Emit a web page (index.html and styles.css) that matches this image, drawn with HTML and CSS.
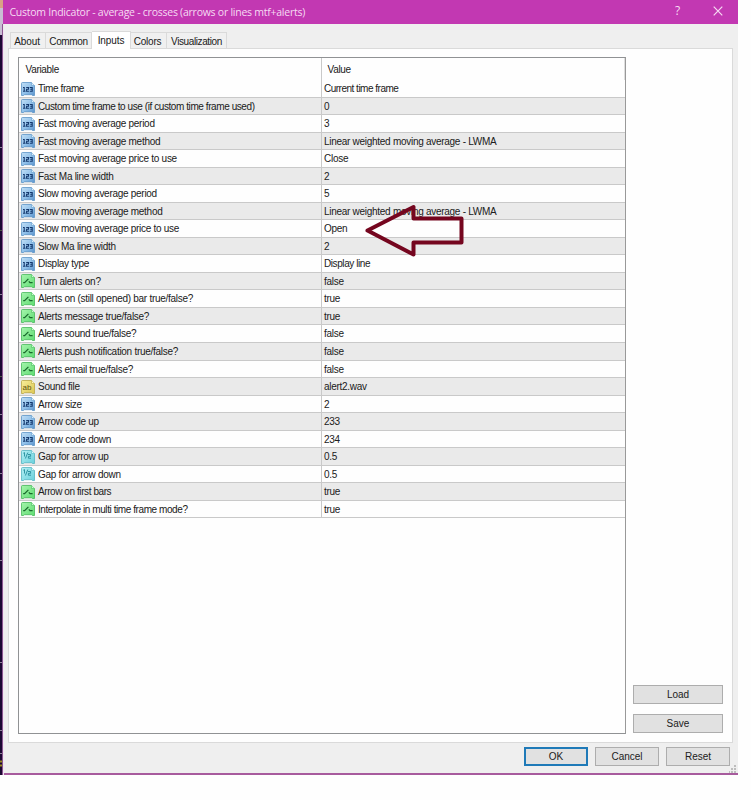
FILE: index.html
```html
<!DOCTYPE html>
<html lang="en">
<head>
<meta charset="utf-8">
<title>Custom Indicator</title>
<link rel="stylesheet" href="styles.css">
</head>
<body>
<svg class="defs" width="0" height="0" aria-hidden="true">
  <defs>
    <linearGradient id="gb" x1="0" y1="0" x2="1" y2="1"><stop offset="0" stop-color="#c0def5"/><stop offset=".55" stop-color="#8fc0ea"/><stop offset="1" stop-color="#5b93cc"/></linearGradient>
    <linearGradient id="gg" x1="0" y1="0" x2="1" y2="1"><stop offset="0" stop-color="#a5f5ac"/><stop offset="1" stop-color="#5fdc72"/></linearGradient>
    <linearGradient id="gy" x1="0" y1="0" x2="1" y2="1"><stop offset="0" stop-color="#f8ee9a"/><stop offset="1" stop-color="#dcc653"/></linearGradient>
    <linearGradient id="gc" x1="0" y1="0" x2="1" y2="1"><stop offset="0" stop-color="#b5f0f4"/><stop offset="1" stop-color="#69d0dc"/></linearGradient>
    <path id="page" d="M.5 1.5Q.5.5 1.5.5H10.5L13.5 3.5V13.5H11.5L10.5 12.7H3.5L2.5 13.5H.5Z"/>
    <symbol id="int" viewBox="0 0 14 14"><use href="#page" fill="url(#gb)" stroke="#5c94c6" stroke-width=".8"/><path d="M10.5 .5V3.5H13.5" fill="#d9edfb" stroke="#6da3d2" stroke-width=".7"/><path d="M2 5.5H3.2V9M2 9.200H4.500M5.200 5.500H7.500V7.300H5.600V9.200H7.900M8.800 5.500H11.200V9.200H8.800M9.300 7.300H11.200" fill="none" stroke="#14386d" stroke-width="1.100"/></symbol>
    <symbol id="bool" viewBox="0 0 14 14"><use href="#page" fill="url(#gg)" stroke="#48b75c" stroke-width=".8"/><path d="M10.5 .5V3.5H13.5" fill="#c8fbce" stroke="#55c467" stroke-width=".7"/><path d="M2.200 8.700H3.600L7.400 4.900M7.800 7.400L9 8.700H11.600" fill="none" stroke="#17662a" stroke-width="1.200"/></symbol>
    <symbol id="str" viewBox="0 0 14 14"><use href="#page" fill="url(#gy)" stroke="#b9a645" stroke-width=".8"/><path d="M10.5 .5V3.5H13.5" fill="#fff8c4" stroke="#c4b04b" stroke-width=".7"/><text x="1.5" y="9.700" class="glyph">ab</text></symbol>
    <symbol id="dbl" viewBox="0 0 14 14"><use href="#page" fill="url(#gc)" stroke="#55b5c1" stroke-width=".8"/><path d="M10.5 .5V3.5H13.5" fill="#dcfafb" stroke="#62bfca" stroke-width=".7"/><path d="M2.300 3.200L3.500 2.600V6.500M6.800 2.600L4.400 8.500M7 4.500H9.600V6.300H7.400V8.200H10" fill="none" stroke="#248b9b" stroke-width=".9"/></symbol>
  </defs>
</svg>
<div class="desktop">
  <svg class="chart" width="3" height="775" viewBox="0 0 3 775"><path d="M0 0H3V775H0Z" fill="#1c0833"/><path d="M0 0H3V8H0Z" fill="#d9a184"/><path d="M0 8H3V35H0Z" fill="#c9bdd3"/><path d="M0 147.500H3M0 294.500H3M0 414.500H3M0 473.500H3M0 560.500H3M0 662.500H3M0 730.500H3M0 753.500H3" stroke="#8d8198"/><path d="M0 230.500H3M0 376.500H3" stroke="#4c5944"/><path d="M0 761.500H2M0 765.500H2" stroke="#9b8c22" stroke-width="2"/><path d="M2.500 24V775" stroke="#8a5690"/></svg>
  <main class="window">
    <header class="title"><span class="caption">Custom Indicator - average - crosses (arrows or lines mtf+alerts)</span><span class="help">?</span><svg class="close" width="10" height="10" viewBox="0 0 10 10"><path d="M.7.7L9.300 9.300M9.300.7L.7 9.300" stroke="#f6dbf3" stroke-width="1.200"/></svg></header>
    <nav class="tabs"><span class="tab t1">About</span><span class="tab t2">Common</span><span class="tab t3 active">Inputs</span><span class="tab t4">Colors</span><span class="tab t5">Visualization</span></nav>
    <section class="panel">
      <div class="list">
        <div class="head"><span>Variable</span><span>Value</span></div>
        <div class="row"><svg><use href="#int"/></svg><span class="tight">Time frame</span><b class="tighter">Current time frame</b></div>
        <div class="row"><svg><use href="#int"/></svg><span class="tight">Custom time frame to use (if custom time frame used)</span><b>0</b></div>
        <div class="row"><svg><use href="#int"/></svg><span>Fast moving average period</span><b>3</b></div>
        <div class="row"><svg><use href="#int"/></svg><span>Fast moving average method</span><b>Linear weighted moving average - LWMA</b></div>
        <div class="row"><svg><use href="#int"/></svg><span>Fast moving average price to use</span><b>Close</b></div>
        <div class="row"><svg><use href="#int"/></svg><span>Fast Ma line width</span><b>2</b></div>
        <div class="row"><svg><use href="#int"/></svg><span>Slow moving average period</span><b>5</b></div>
        <div class="row"><svg><use href="#int"/></svg><span>Slow moving average method</span><b>Linear weighted moving average - LWMA</b></div>
        <div class="row"><svg><use href="#int"/></svg><span>Slow moving average price to use</span><b>Open</b></div>
        <div class="row"><svg><use href="#int"/></svg><span>Slow Ma line width</span><b>2</b></div>
        <div class="row"><svg><use href="#int"/></svg><span>Display type</span><b class="tight">Display line</b></div>
        <div class="row"><svg><use href="#bool"/></svg><span>Turn alerts on?</span><b>false</b></div>
        <div class="row"><svg><use href="#bool"/></svg><span>Alerts on (still opened) bar true/false?</span><b>true</b></div>
        <div class="row"><svg><use href="#bool"/></svg><span>Alerts message true/false?</span><b>true</b></div>
        <div class="row"><svg><use href="#bool"/></svg><span>Alerts sound true/false?</span><b>false</b></div>
        <div class="row"><svg><use href="#bool"/></svg><span>Alerts push notification true/false?</span><b>false</b></div>
        <div class="row"><svg><use href="#bool"/></svg><span>Alerts email true/false?</span><b>false</b></div>
        <div class="row"><svg><use href="#str"/></svg><span>Sound file</span><b>alert2.wav</b></div>
        <div class="row"><svg><use href="#int"/></svg><span>Arrow size</span><b>2</b></div>
        <div class="row"><svg><use href="#int"/></svg><span>Arrow code up</span><b>233</b></div>
        <div class="row"><svg><use href="#int"/></svg><span>Arrow code down</span><b>234</b></div>
        <div class="row"><svg><use href="#dbl"/></svg><span>Gap for arrow up</span><b>0.5</b></div>
        <div class="row"><svg><use href="#dbl"/></svg><span>Gap for arrow down</span><b>0.5</b></div>
        <div class="row"><svg><use href="#bool"/></svg><span class="tight">Arrow on first bars</span><b>true</b></div>
        <div class="row"><svg><use href="#bool"/></svg><span class="tight">Interpolate in multi time frame mode?</span><b>true</b></div>
      </div>
      <aside class="side"><button>Load</button><button>Save</button></aside>
    </section>
    <footer class="actions"><button class="primary">OK</button><button>Cancel</button><button>Reset</button><svg class="grip" width="8" height="8" viewBox="0 0 8 8"><path d="M5 0h2v2h-2zM2 3h2v2h-2zM5 3h2v2h-2zM0 6h1v2h-1zM2 6h2v2h-2zM5 6h2v2h-2z" fill="#bdbdbd"/></svg></footer>
    <div class="edge"></div>
  </main>
  <svg class="arrow" width="100" height="56" viewBox="365 203 100 56"><path d="M367.500 230.500L413.500 207V218.500H461.500V242.500H413.500V254.500Z" fill="none" stroke="#75061f" stroke-width="4" stroke-linejoin="round"/></svg>
</div>
</body>
</html>
```
FILE: styles.css
```css
* { box-sizing: border-box; }
body { margin: 0; background: #fefefe; color: #202020; font: 10px/14px "Liberation Sans", sans-serif; }
.defs { position: absolute; }
.desktop { position: relative; display: flex; width: 751px; height: 800px; overflow: hidden; }
.chart { flex: none; }
.window { width: 735px; height: 775px; display: flex; flex-direction: column; background: #efefef; border-left: 1px solid #f1e6f0; }
.title { height: 24px; flex: none; display: flex; align-items: center; background: #c238b2; color: #f6dbf3; margin-left: -1px; font: 10.5px/22px "Open Sans", sans-serif; }
.caption { width: 665px; padding-left: 6.5px; letter-spacing: -0.25px; white-space: nowrap; margin-top: -1px; }
.help { width: 45px; padding-left: 7px; font-size: 12px; margin-top: -2px; }
.close { margin-top: -2px; }
.tabs { height: 24px; flex: none; display: flex; align-items: flex-end; padding-left: 6px; }
.tab { height: 16px; border: 1px solid #dadada; border-width: 1px 1px 0 0; background: #f0f0f0; text-align: center; line-height: 17px; letter-spacing: -.3px; white-space: nowrap; }
.t1 { width: 36px; border-left-width: 1px; padding-right: 2px; letter-spacing: -.1px; }
.t2 { width: 46px; letter-spacing: -.35px; }
.t3 { width: 39px; letter-spacing: -.1px; }
.t4 { width: 36px; padding-right: 2px; letter-spacing: -.2px; }
.t5 { width: 60px; letter-spacing: -.4px; }
.active { height: 18px; background: #fff; position: relative; margin-bottom: -1px; }
.panel { height: 695px; flex: none; width: 725px; margin-left: 4px; border: 1px solid #dadada; background: #fefefe; display: flex; padding: 8px 0 0 9px; }
.list { width: 608px; height: 677px; border: 1px solid #909294; border-right-color: #999; flex: none; background: linear-gradient(#c9c9c9, #c9c9c9) 302px 0 / 1px 460px no-repeat #fefefe; }
.head { height: 22px; display: grid; grid-template-columns: 302px 1fr; line-height: 24px; border-right: 1px solid #dedede; letter-spacing: -.3px; }
.head span { padding-left: 6.5px; }
.row { height: 17.54px; display: grid; grid-template-columns: 19px 283px 1fr; align-items: center; border-bottom: 1px solid #c9c9c9; line-height: 16px; letter-spacing: -.28px; white-space: nowrap; }
.row:nth-child(odd) { background: linear-gradient(#c9c9c9, #c9c9c9) 302px 0 / 1px 100% no-repeat #eaeaea; }
.row svg { width: 14px; height: 14px; margin-left: 2px; }
.row span { padding-top: 1px; }
.row b { font-weight: normal; padding: 1px 0 0 3px; }
.row .tight { letter-spacing: -.42px; }
.row .tighter { letter-spacing: -.5px; }
.glyph { font: 8px "Liberation Sans", sans-serif; letter-spacing: 0; fill: #5d5312; }
.side { display: flex; flex-direction: column; justify-content: flex-end; gap: 10px; padding: 0 0 9px 7px; }
button { flex: none; width: 90px; height: 19px; padding: 0; background: #e1e1e1; border: 1px solid #adadad; color: #202020; font: 10px/17px "Liberation Sans", sans-serif; }
.actions { height: 30px; display: flex; gap: 7px; padding: 4px 0 0 520px; }
.actions button { width: 64px; }
.actions .primary { border: 2px solid #1f7ab8; line-height: 15px; }
.grip { flex: none; margin: 18px 0 0 -8px; }
.edge { height: 2px; background: #a75b9d; }
.arrow { position: absolute; left: 365px; top: 203px; }
```
